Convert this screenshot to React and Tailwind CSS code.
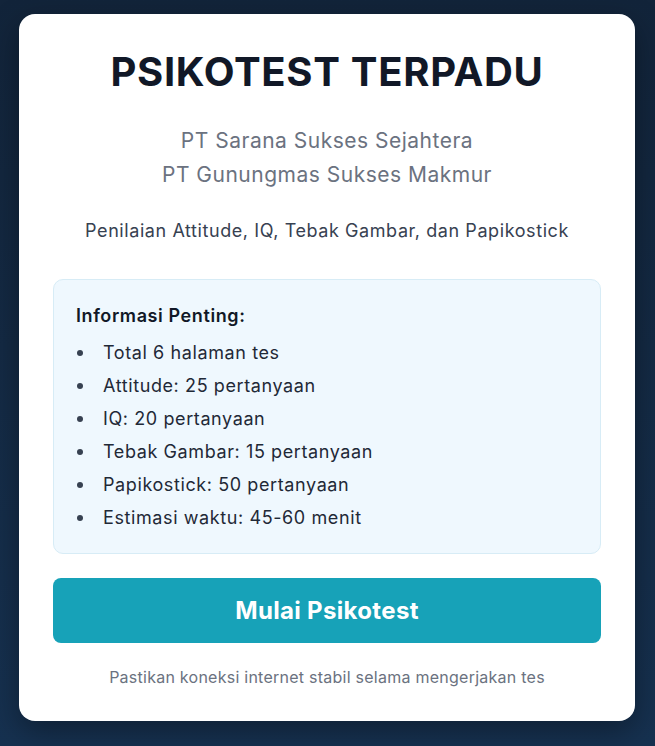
export default function App() {
  const items = [
    "Total 6 halaman tes",
    "Attitude: 25 pertanyaan",
    "IQ: 20 pertanyaan",
    "Tebak Gambar: 15 pertanyaan",
    "Papikostick: 50 pertanyaan",
    "Estimasi waktu: 45-60 menit",
  ];
  return (
    <div
      className="min-h-[746px] w-full bg-gradient-to-b from-[#12243a] to-[#163150] pt-[14px] pb-[25px] pl-[19px]"
      style={{ fontFamily: "Inter, 'Noto Sans', sans-serif" }}
    >
      <div className="w-[616px] rounded-[16px] bg-white px-[34px] pt-[33px] pb-[32px] shadow-[0_10px_30px_rgba(0,0,0,0.35)]">
        <h1 className="text-center text-[40px] leading-[50px] font-bold tracking-[0.7px] text-[#111827]">
          PSIKOTEST TERPADU
        </h1>
        <div className="mt-[27px] text-center text-[21px] leading-[34px] tracking-[0.5px] text-[#6b7280]">
          <div>PT Sarana Sukses Sejahtera</div>
          <div>PT Gunungmas Sukses Makmur</div>
        </div>
        <p className="mt-[25px] text-center text-[18px] leading-[28px] tracking-[0.58px] text-[#374151]">
          Penilaian Attitude, IQ, Tebak Gambar, dan Papikostick
        </p>
        <div className="mt-[34px] rounded-[10px] border border-[#d7ecf6] bg-[#eff8fe] pl-[22px] pr-[22px] pt-[22px] pb-[19px]">
          <div className="text-[18px] leading-[28px] font-semibold tracking-[0.6px] text-[#111827]">
            Informasi Penting:
          </div>
          <ul className="mt-[6px]">
            {items.map((t) => (
              <li key={t} className="flex items-center text-[18px] leading-[33px] tracking-[0.6px] text-[#1f2937]">
                <span className="ml-[1px] mr-[20px] h-[6px] w-[6px] rounded-full bg-[#374151]" />
                <span>{t}</span>
              </li>
            ))}
          </ul>
        </div>
        <button className="mt-[24px] flex h-[65px] w-full items-center justify-center rounded-[8px] bg-[#17a2b8] text-[24px] font-bold tracking-[0.33px] text-white">
          Mulai Psikotest
        </button>
        <p className="mt-[22px] text-center text-[16px] leading-[24px] tracking-[0.25px] text-[#6b7280]">
          Pastikan koneksi internet stabil selama mengerjakan tes
        </p>
      </div>
    </div>
  );
}
